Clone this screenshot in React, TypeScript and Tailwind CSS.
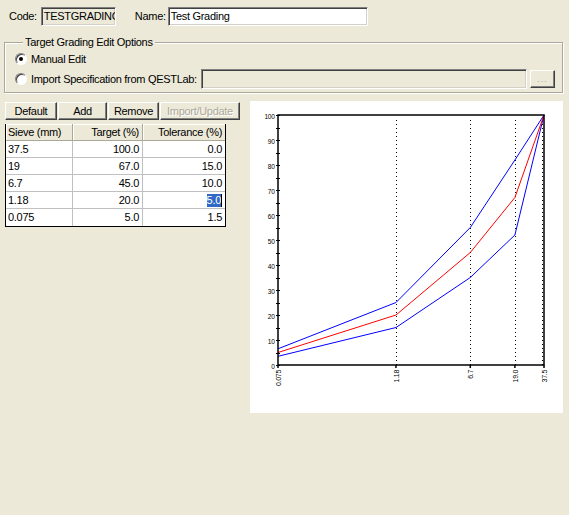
import React from 'react';

interface SieveRow {
  sieve: string;
  size: number;
  target: number;
  tolerance: number;
}

const rows: SieveRow[] = [
  { sieve: '37.5', size: 37.5, target: 100, tolerance: 0 },
  { sieve: '19', size: 19, target: 67, tolerance: 15 },
  { sieve: '6.7', size: 6.7, target: 45, tolerance: 10 },
  { sieve: '1.18', size: 1.18, target: 20, tolerance: 5 },
  { sieve: '0.075', size: 0.075, target: 5, tolerance: 1.5 },
];

const sunken =
  'border border-t-[#808080] border-l-[#808080] border-b-white border-r-white shadow-[inset_1px_1px_0_#404040,inset_-1px_-1px_0_#d4d0c8]';
const raised =
  'border border-t-white border-l-white border-b-[#404040] border-r-[#404040] shadow-[inset_-1px_-1px_0_#808080] bg-[#ECE9D8]';

function Radio({ checked }: { checked?: boolean }) {
  return (
    <div className="w-[12px] h-[12px] rounded-full bg-white border border-t-[#808080] border-l-[#808080] border-b-white border-r-white shadow-[inset_1px_1px_0_#404040] flex items-center justify-center shrink-0">
      {checked && <div className="w-[4px] h-[4px] rounded-full bg-black" />}
    </div>
  );
}

function Button({ label, width, disabled }: { label: string; width: string; disabled?: boolean }) {
  return (
    <div
      className={`${raised} ${width} h-[18px] flex items-center justify-center ${
        disabled ? 'text-[#aca899] [text-shadow:1px_1px_0_white]' : 'text-black'
      }`}
    >
      {label}
    </div>
  );
}

// chart geometry (panel coordinates)
const L = 28;
const R = 294;
const T = 14;
const B = 264;
const minLog = Math.log10(0.075);
const maxLog = Math.log10(37.5);
const xOf = (v: number) => L + ((Math.log10(v) - minLog) / (maxLog - minLog)) * (R - L);
const yOf = (p: number) => B - (p / 100) * (B - T);

function GradingChart() {
  const sorted = [...rows].sort((a, b) => a.size - b.size);
  const pts = (fn: (r: SieveRow) => number) =>
    sorted.map((r) => `${xOf(r.size).toFixed(1)},${yOf(Math.min(100, fn(r))).toFixed(1)}`).join(' ');
  const ticks = Array.from({ length: 21 }, (_, i) => i * 5);
  const xLabels = [
    { v: 0.075, t: '0.075' },
    { v: 1.18, t: '1.18' },
    { v: 6.7, t: '6.7' },
    { v: 19, t: '19.0' },
    { v: 37.5, t: '37.5' },
  ];

  return (
    <div className="w-[313px] h-[312px] bg-white">
      <svg width="313" height="312" viewBox="0 0 313 312">
        {/* dotted gridlines */}
        {[1.18, 6.7, 19].map((v) => (
          <line
            key={v}
            x1={Math.round(xOf(v)) + 0.5}
            x2={Math.round(xOf(v)) + 0.5}
            y1={T + 5}
            y2={B}
            stroke="#000"
            strokeWidth="1"
            strokeDasharray="1 3"
          />
        ))}
        <line x1={R - 1.5} x2={R - 1.5} y1={T + 5} y2={B} stroke="#000" strokeWidth="1" strokeDasharray="1 3" />

        {/* ticks + y labels */}
        {ticks.map((p) => (
          <g key={p}>
            <line x1={L - 2} x2={L + 2} y1={Math.round(yOf(p)) + 0.5} y2={Math.round(yOf(p)) + 0.5} stroke="#000" strokeWidth="1" shapeRendering="crispEdges" />
            {p % 10 === 0 && (
              <text
                x={24.5}
                y={yOf(p) + 1}
                textAnchor="end"
                dominantBaseline="central"
                fontSize="6.5"
                fontFamily="'Liberation Sans', Arial, sans-serif"
                fill="#000"
              >
                {p}
              </text>
            )}
          </g>
        ))}

        {/* curves */}
        <polyline points={pts((r) => r.target + r.tolerance)} fill="none" stroke="#0000ff" strokeWidth="1" />
        <polyline points={pts((r) => r.target - r.tolerance)} fill="none" stroke="#0000ff" strokeWidth="1" />
        <polyline points={pts((r) => r.target)} fill="none" stroke="#ff0000" strokeWidth="1" />

        {/* axes */}
        <rect x={L} y={T} width={R - L} height={B - T} fill="none" stroke="#000" strokeWidth="1.5" />

        {/* x ticks + labels */}
        {xLabels.map((l) => {
          const x = xOf(l.v);
          return (
            <g key={l.t}>
              <line x1={x} x2={x} y1={B} y2={B + 3} stroke="#000" strokeWidth="1.5" />
              <text
                x={x + 0.5}
                y={B + 5}
                textAnchor="end"
                dominantBaseline="central"
                fontSize="7"
                fontFamily="'Liberation Sans', Arial, sans-serif"
                fill="#000"
                transform={`rotate(-90 ${x + 0.5} ${B + 5})`}
              >
                {l.t}
              </text>
            </g>
          );
        })}
      </svg>
    </div>
  );
}

export default function App() {
  return (
    <div className="w-[569px] h-[515px] bg-[#ECE9D8] text-[11px] leading-[13px] tracking-[-0.3px] text-black font-['Liberation_Sans',Arial,sans-serif] overflow-hidden">
      {/* code / name */}
      <div className="flex items-center pt-[7px] pl-[9px] h-[26px]">
        <span>Code:</span>
        <div className={`${sunken} ml-[4px] w-[75px] h-[19px] bg-[#ECE9D8] pl-[2px] flex items-center overflow-hidden whitespace-nowrap`}>
          TESTGRADING
        </div>
        <span className="ml-[19px]">Name:</span>
        <div className={`${sunken} ml-[2px] w-[200px] h-[19px] bg-white pl-[2px] flex items-center whitespace-nowrap`}>
          Test Grading
        </div>
      </div>

      {/* edit options group */}
      <fieldset className="ml-[4px] mt-[10px] w-[559px] border border-[#aca899] shadow-[inset_1px_1px_0_white,1px_1px_0_white] pl-[10px] pr-[7px] pb-[3px]">
        <legend className="ml-[8px] px-[2px] bg-[#ECE9D8]">Target Grading Edit Options</legend>
        <div className="flex items-center gap-[4px] h-[14px] mt-[3px]">
          <Radio checked />
          <span>Manual Edit</span>
        </div>
        <div className="flex items-center h-[20px] mt-[3px]">
          <Radio />
          <span className="ml-[4px] whitespace-nowrap">Import Specification from QESTLab:</span>
          <div className={`${sunken} ml-[4px] flex-1 h-[20px] bg-[#ECE9D8]`} />
          <div className={`${raised} ml-[3px] w-[25px] h-[18px] flex items-center justify-center text-[#aca899] text-[9px] tracking-[1px]`}>
            ...
          </div>
        </div>
      </fieldset>

      {/* grid + chart */}
      <div className="flex pl-[5px] mt-[8px]">
        <div className="w-[240px] pt-[1px]">
          <div className="flex gap-[1px]">
            <Button label="Default" width="w-[52px]" />
            <Button label="Add" width="w-[49px]" />
            <Button label="Remove" width="w-[51px]" />
            <Button label="Import/Update" width="w-[80px]" disabled />
          </div>
          <div className="mt-[4px] w-[221px] border-l border-r border-b border-black">
            <div className="flex h-[17px] bg-[#ECE9D8]">
              <div className="w-[67px] px-[2px] flex items-center border-r border-b border-[#aca899] shadow-[inset_1px_1px_0_white]">Sieve (mm)</div>
              <div className="w-[70px] px-[3px] flex items-center justify-end border-r border-b border-[#aca899] shadow-[inset_1px_1px_0_white]">Target (%)</div>
              <div className="flex-1 px-[3px] flex items-center justify-end border-b border-[#aca899] shadow-[inset_1px_1px_0_white]">Tolerance (%)</div>
            </div>
            {rows.map((r, i) => (
              <div key={r.sieve} className={`flex h-[17px] bg-white ${i < rows.length - 1 ? 'border-b border-[#c0c0c0]' : ''}`}>
                <div className="w-[67px] px-[2px] flex items-center border-r border-[#c0c0c0]">{r.sieve}</div>
                <div className="w-[70px] px-[3px] flex items-center justify-end border-r border-[#c0c0c0]">{r.target.toFixed(1)}</div>
                <div className="flex-1 px-[3px] flex items-center justify-end">
                  {r.sieve === '1.18' ? (
                    <span className="flex items-center">
                      <span className="bg-[#316AC5] text-white">{r.tolerance.toFixed(1)}</span>
                      <span className="w-[1px] h-[13px] bg-black" />
                    </span>
                  ) : (
                    r.tolerance.toFixed(1)
                  )}
                </div>
              </div>
            ))}
          </div>
        </div>
        <div className="ml-[5px]">
          <GradingChart />
        </div>
      </div>
    </div>
  );
}
